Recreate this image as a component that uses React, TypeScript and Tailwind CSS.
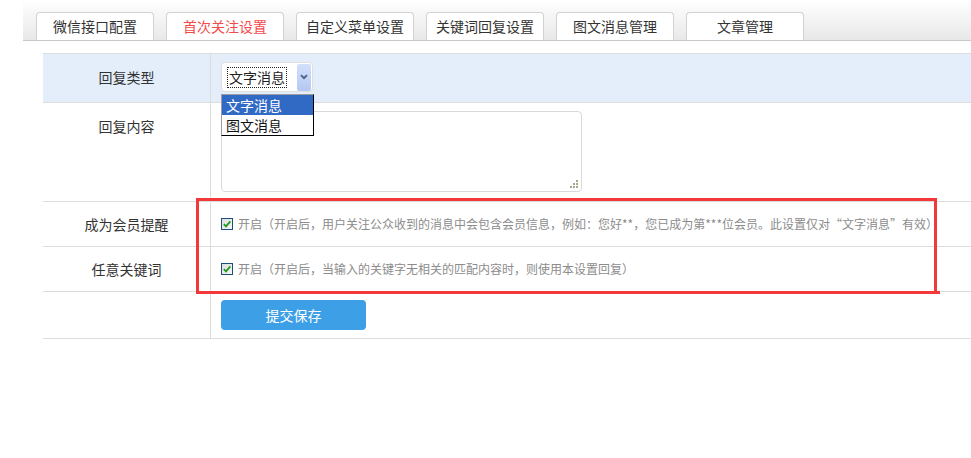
import React from 'react';

const tabs = ['微信接口配置', '首次关注设置', '自定义菜单设置', '关键词回复设置', '图文消息管理', '文章管理'];

const CheckBox = () => (
  <svg width="12" height="12" viewBox="0 0 12 12" className="shrink-0">
    <defs>
      <linearGradient id="cbg" x1="0" y1="0" x2="1" y2="1">
        <stop offset="0" stopColor="#dcdcdc" />
        <stop offset="1" stopColor="#f8f8f8" />
      </linearGradient>
    </defs>
    <rect x="0.5" y="0.5" width="11" height="11" fill="url(#cbg)" stroke="#1d4f7c" />
    <path d="M2.8 6.2 L5 8.4 L9.3 3.4" fill="none" stroke="#1f9a1f" strokeWidth="1.8" />
  </svg>
);

export default function App() {
  return (
    <div
      className="relative w-[971px] h-[458px] bg-white overflow-hidden text-[#333]"
      style={{ fontFamily: '"Microsoft YaHei", "Noto Sans CJK SC", "Noto Sans", sans-serif' }}
    >
      {/* Tabs */}
      <div className="ml-[23px] h-[41px] bg-gradient-to-b from-white to-[#e8e8e8] border-b border-[#c9c9c9] flex items-end gap-[12px] pl-[13px]">
        {tabs.map((t, i) => (
          <div
            key={t}
            className={`w-[118px] h-[28px] bg-white border border-b-0 border-[#d2d2d2] rounded-t-[4px] flex items-center justify-center text-[14px] ${
              i === 1 ? 'text-[#f54a4a]' : 'text-[#333]'
            }`}
          >
            {t}
          </div>
        ))}
      </div>

      {/* Form table */}
      <div className="mt-[12px] ml-[43px] border-t border-[#dcdcdc] text-[14px]">
        {/* 回复类型 */}
        <div className="flex bg-[#e3eefa] border-b border-[#dcdcdc]">
          <div className="w-[168px] border-r border-[#dcdcdc] text-center leading-[30px] pt-[8px] pb-[10px]">回复类型</div>
          <div className="pl-[10px] pt-[8px] pb-[10px]">
            <div className="relative">
              <div className="w-[92px] h-[30px] bg-white border border-[#dedede] rounded-[4px] flex items-center pl-[5px] pr-[1px]">
                <span className="border border-dotted border-[#222] leading-[19px] px-[1px] text-[14px] text-[#222]">文字消息</span>
                <span className="ml-auto w-[14px] h-[27px] rounded-[2px] bg-gradient-to-b from-[#d3e0fb] to-[#b3c8f3] flex items-center justify-center">
                  <svg width="8" height="6" viewBox="0 0 8 6">
                    <path d="M1 1.2 L4 4.2 L7 1.2" fill="none" stroke="#4a5d84" strokeWidth="1.8" />
                  </svg>
                </span>
              </div>
              {/* open dropdown */}
              <div className="absolute left-0 top-[32px] z-10 w-[93px] bg-white border border-t-[#9c9c9c] border-l-[#9c9c9c] border-r-black border-b-black text-[14px] leading-[20px]">
                <div className="bg-[#316ac5] text-white pl-[4px]">文字消息</div>
                <div className="text-[#111] pl-[4px]">图文消息</div>
              </div>
            </div>
          </div>
        </div>

        {/* 回复内容 */}
        <div className="flex border-b border-[#dcdcdc]">
          <div className="w-[168px] border-r border-[#dcdcdc] text-center leading-[30px] pt-[8px]">回复内容</div>
          <div className="pl-[10px] pt-[8px] pb-[9px]">
            <div className="relative w-[361px] h-[81px] border border-[#d9d9d9] rounded-[4px] bg-white">
              <svg className="absolute right-[3px] bottom-[3px]" width="8" height="8" viewBox="0 0 8 8">
                <rect x="6" y="0" width="2" height="2" fill="#a9a68e" />
                <rect x="3" y="3" width="2" height="2" fill="#a9a68e" />
                <rect x="6" y="3" width="2" height="2" fill="#a9a68e" />
                <rect x="0" y="6" width="2" height="2" fill="#a9a68e" />
                <rect x="3" y="6" width="2" height="2" fill="#a9a68e" />
                <rect x="6" y="6" width="2" height="2" fill="#a9a68e" />
              </svg>
            </div>
          </div>
        </div>

        {/* 成为会员提醒 */}
        <div className="flex h-[45px] border-b border-[#dcdcdc]">
          <div className="w-[168px] border-r border-[#dcdcdc] flex items-center justify-center">成为会员提醒</div>
          <div className="pl-[10px] flex items-center gap-[5px] text-[12px] text-[#8c8c8c]">
            <CheckBox />
            <span>开启（开启后，用户关注公众收到的消息中会包含会员信息，例如：您好**，您已成为第***位会员。此设置仅对“文字消息”有效）</span>
          </div>
        </div>

        {/* 任意关键词 */}
        <div className="flex h-[45px] border-b border-[#dcdcdc]">
          <div className="w-[168px] border-r border-[#dcdcdc] flex items-center justify-center">任意关键词</div>
          <div className="pl-[10px] flex items-center gap-[5px] text-[12px] text-[#8c8c8c]">
            <CheckBox />
            <span>开启（开启后，当输入的关键字无相关的匹配内容时，则使用本设置回复）</span>
          </div>
        </div>

        {/* submit */}
        <div className="flex border-b border-[#dcdcdc]">
          <div className="w-[168px] border-r border-[#dcdcdc]" />
          <div className="pl-[10px] py-[8px]">
            <button className="w-[145px] h-[30px] rounded-[4px] bg-[#3d9fe6] text-white text-[14px]">提交保存</button>
          </div>
        </div>
      </div>

      {/* red highlight frame */}
      <div className="absolute left-[196px] top-[198px] w-[741px] h-[96px] border-[3px] border-[#f23838]" />
      <div className="absolute left-[937px] top-[291px] w-[3px] h-[3px] bg-[#f23838]" />
    </div>
  );
}
